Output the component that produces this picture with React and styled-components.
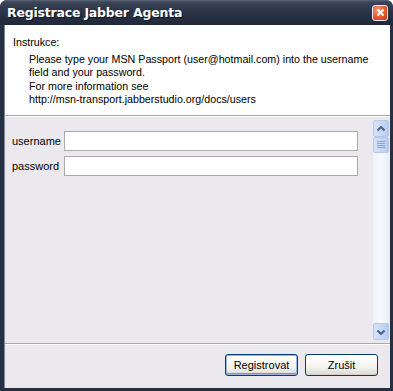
import React from "react";
import styled, { createGlobalStyle } from "styled-components";

const Global = createGlobalStyle`
  html, body { margin: 0; padding: 0; background: #ffffff; }
  body { font-family: "Liberation Sans", Arial, sans-serif; }
`;

const Window = styled.div`
  width: 393px;
  height: 391px;
  box-sizing: border-box;
  display: flex;
  flex-direction: column;
  background: #253043;
  border-radius: 7px 7px 0 0;
  overflow: hidden;
`;

const TitleBar = styled.div`
  height: 25px;
  flex: none;
  display: flex;
  align-items: center;
  justify-content: space-between;
  padding: 0 5px 0 7px;
  background: linear-gradient(#5a6577 0px, #3d4759 2px, #2f394b 8px, #252f41 18px, #1f2838 25px);
`;

const Title = styled.span`
  color: #ffffff;
  font-family: "DejaVu Sans", Verdana, sans-serif;
  font-weight: bold;
  font-size: 12.5px;
  letter-spacing: -0.2px;
  text-shadow: 1px 1px 0 #0c1220;
`;

const CloseButton = styled.div`
  width: 16px;
  height: 16px;
  border-radius: 3px;
  border: 1px solid #e8ecf4;
  box-sizing: border-box;
  background: radial-gradient(circle at 35% 30%, #f39a78, #e0532c 60%, #c33a18);
  display: flex;
  align-items: center;
  justify-content: center;
`;

const Frame = styled.div`
  flex: 1;
  display: flex;
  flex-direction: column;
  margin: 0 3px 3px 4px;
  background: #ebe9ed;
  border-left: 1px solid #7c8696;
`;

const Instructions = styled.div`
  background: #ffffff;
  height: 90px;
  padding: 11px 0 0 8px;
  box-sizing: border-box;
  font-size: 10.7px;
  color: #000;
  white-space: nowrap;
`;

const Heading = styled.div`
  line-height: 13px;
  margin-bottom: 4px;
`;

const InstrText = styled.div`
  padding-left: 16px;
  line-height: 13.3px;
`;

const Separator = styled.div`
  height: 1px;
  border-top: 1px solid #a8a7ab;
  background: #ffffff;
  flex: none;
`;

const Middle = styled.div`
  height: 226px;
  display: flex;
  flex: none;
`;

const Form = styled.div`
  flex: 1;
  padding: 14px 15px 0 7px;
  display: grid;
  grid-template-columns: auto 1fr;
  column-gap: 3px;
  row-gap: 5px;
  align-content: start;
  align-items: center;
  font-size: 11px;
`;

const Label = styled.span`
  color: #000;
`;

const Input = styled.div`
  height: 20px;
  box-sizing: border-box;
  background: #ffffff;
  border: 1px solid #a9a9a9;
`;

const ScrollBar = styled.div`
  width: 16px;
  margin: 3px 1px 3px 0;
  display: flex;
  flex-direction: column;
  background: linear-gradient(90deg, #eef3fb, #f7f9fd 50%, #e8eef8);
`;

const ScrollBtn = styled.div`
  width: 16px;
  height: 17px;
  box-sizing: border-box;
  border: 1px solid #b6c8e6;
  border-radius: 2px;
  background: linear-gradient(90deg, #d6e4fb, #c4d7f6 60%, #b6cbef);
  display: flex;
  align-items: center;
  justify-content: center;
`;

const Thumb = styled(ScrollBtn)`
  height: 16px;
`;

const Track = styled.div`
  flex: 1;
`;

const ButtonRow = styled.div`
  flex: 1;
  display: flex;
  justify-content: flex-end;
  align-items: flex-start;
  gap: 7px;
  padding: 9px 12px 0 0;
`;

const Button = styled.div`
  width: 73px;
  height: 22px;
  box-sizing: border-box;
  border: 1px solid #003c74;
  border-radius: 3px;
  background: linear-gradient(#ffffff, #f4f3ee 60%, #dcdad2);
  display: flex;
  align-items: center;
  justify-content: center;
  font-size: 11px;
  color: #000;
  box-shadow: ${(p) => (p.$default ? "inset 0 0 0 1px #9bb7e8, inset 0 -1px 0 1px #6f93d6" : "inset 0 -1px 0 0 #d6d0c5")};
`;

const Chevron = ({ up }) => (
  <svg width="8" height="6" viewBox="0 0 8 6">
    <path
      d={up ? "M0.5 4.5 L4 1 L7.5 4.5" : "M0.5 1.5 L4 5 L7.5 1.5"}
      fill="none"
      stroke="#4d6185"
      strokeWidth="2"
    />
  </svg>
);

const Grip = () => (
  <svg width="8" height="8" viewBox="0 0 8 8">
    {[0.5, 2.5, 4.5, 6.5].map((y) => (
      <line key={y} x1="0" x2="8" y1={y} y2={y} stroke="#8ea3c6" strokeWidth="1" />
    ))}
  </svg>
);

export default function App() {
  return (
    <>
      <Global />
      <Window>
        <TitleBar>
          <Title>Registrace Jabber Agenta</Title>
          <CloseButton>
            <svg width="9" height="9" viewBox="0 0 9 9">
              <path d="M1.5 1.5 L7.5 7.5 M7.5 1.5 L1.5 7.5" stroke="#ffffff" strokeWidth="2" />
            </svg>
          </CloseButton>
        </TitleBar>
        <Frame>
          <Instructions>
            <Heading>Instrukce:</Heading>
            <InstrText>
              Please type your MSN Passport (user@hotmail.com) into the username
              <br />
              field and your password.
              <br />
              For more information see
              <br />
              http://msn-transport.jabberstudio.org/docs/users
            </InstrText>
          </Instructions>
          <Separator />
          <Middle>
            <Form>
              <Label>username</Label>
              <Input />
              <Label>password</Label>
              <Input />
            </Form>
            <ScrollBar>
              <ScrollBtn>
                <Chevron up />
              </ScrollBtn>
              <Thumb>
                <Grip />
              </Thumb>
              <Track />
              <ScrollBtn>
                <Chevron />
              </ScrollBtn>
            </ScrollBar>
          </Middle>
          <Separator />
          <ButtonRow>
            <Button $default>Registrovat</Button>
            <Button>Zrušit</Button>
          </ButtonRow>
        </Frame>
      </Window>
    </>
  );
}
